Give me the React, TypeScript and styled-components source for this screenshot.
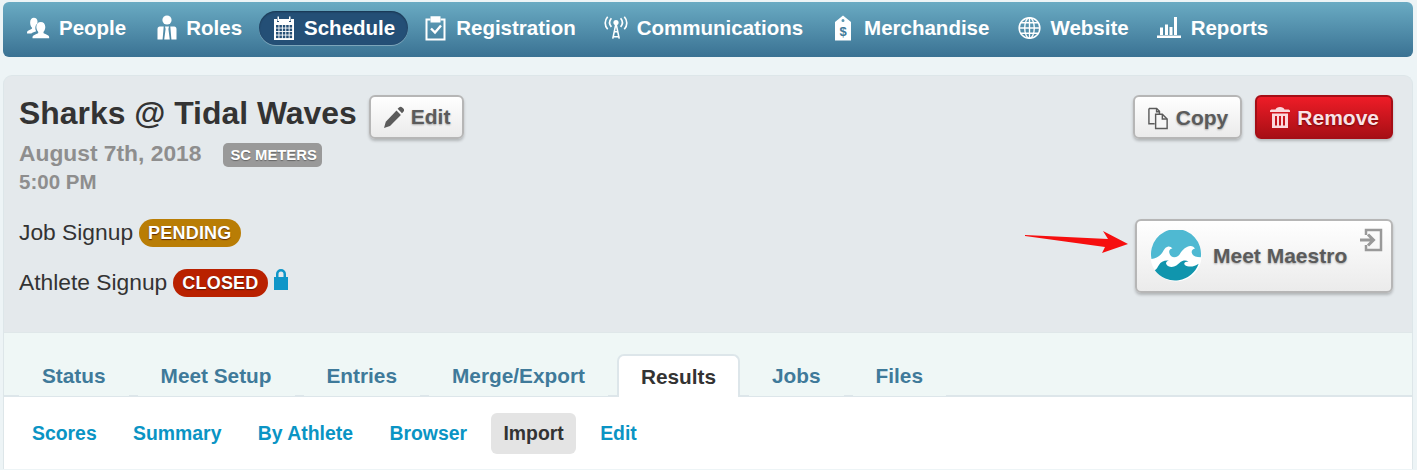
import styled, { createGlobalStyle } from 'styled-components';

const GlobalStyle = createGlobalStyle`
	html, body {
		margin: 0;
		padding: 0;
		background: #edf4f6;
		font-family: "Liberation Sans", Arial, sans-serif;
		color: #333;
		overflow: hidden;
	}
`;

const Page = styled.div`
	width: 1417px;
	height: 470px;
	padding: 2px 4px 0 3px;
	box-sizing: border-box;
	overflow: hidden;
`;

const NavBar = styled.nav`
	height: 55px;
	display: flex;
	align-items: center;
	padding: 0 0 3px 9px;
	box-sizing: border-box;
	border-radius: 6px;
	background: linear-gradient(#6aabc3, #3a7293);
`;

const NavItem = styled.a<{ $active?: boolean; $pull?: number }>`
	display: flex;
	align-items: center;
	height: 34px;
	box-sizing: border-box;
	padding: 0 13px 0 14px;
	margin-right: 3px;
	margin-left: ${(p) => p.$pull ?? 0}px;
	gap: 9px;
	color: #fff;
	font-size: 20.5px;
	font-weight: 700;
	white-space: nowrap;
	border-radius: 17px;
	background: ${(p) => (p.$active ? '#244f76' : 'transparent')};
	box-shadow: ${(p) =>
		p.$active ? 'inset 0 1px 2px rgba(0,0,0,.35), 0 1px 0 rgba(255,255,255,.3)' : 'none'};
	svg {
		display: block;
		flex: none;
	}
`;

const Panel = styled.main`
	margin-top: 18px;
	border: 1px solid #dde6e9;
	border-bottom: 0;
	border-radius: 9px 9px 0 0;
	background: #e4e9ec;
	overflow: hidden;
`;

const Header = styled.header`
	height: 257px;
	display: flex;
	justify-content: space-between;
	padding: 19px 19px 0 15px;
	box-sizing: border-box;
	border-bottom: 1px solid #dfe7e9;
	position: relative;
`;

const TitleRow = styled.div`
	display: flex;
	align-items: center;
	gap: 12px;
	height: 43px;
`;

const Title = styled.h1`
	margin: 0;
	font-size: 31.9px;
	font-weight: 700;
	color: #333;
	line-height: 38px;
	position: relative;
	top: -4px;
`;

const Button = styled.button<{ $danger?: boolean }>`
	display: inline-flex;
	align-items: center;
	justify-content: center;
	gap: 6px;
	height: 44px;
	padding: 1px 12px 0;
	box-sizing: border-box;
	font-family: inherit;
	font-size: 21px;
	font-weight: 700;
	border-radius: 6px;
	color: ${(p) => (p.$danger ? '#fbe3e6' : '#5b5b5b')};
	border: 2px solid ${(p) => (p.$danger ? '#a50e16' : '#b6b6b6')};
	background: ${(p) =>
		p.$danger ? 'linear-gradient(#ee1c27, #a80f15)' : 'linear-gradient(#ffffff, #ebebeb)'};
	box-shadow: 0 2px 3px rgba(0, 0, 0, 0.22);
	text-shadow: ${(p) =>
		p.$danger ? '0 1px 2px rgba(80,0,0,.8)' : '0 1px 2px rgba(0,0,0,.3)'};
`;

const DateRow = styled.div`
	display: flex;
	align-items: center;
	height: 31px;
	gap: 22px;
`;

const Muted = styled.span`
	color: #8e8e8e;
	font-size: 22.8px;
	font-weight: 700;
`;

const TimeText = styled(Muted)`
	display: block;
	font-size: 20.5px;
	line-height: 26px;
`;

const KindBadge = styled.span`
	background: #999;
	color: #fff;
	font-size: 14.8px;
	font-weight: 700;
	height: 24px;
	line-height: 24px;
	padding: 0 5px 0 7px;
	border-radius: 5px;
	margin-top: 3px;
	text-shadow: 0 1px 1px rgba(0, 0, 0, 0.35);
`;

const SignupList = styled.div`
	margin-top: 24px;
	display: flex;
	flex-direction: column;
	gap: 22px;
`;

const SignupRow = styled.div`
	display: flex;
	align-items: center;
	height: 28px;
	gap: 6px;
	font-size: 22.8px;
	color: #333;
`;

const SignupLabel = styled.span`
	margin-bottom: 2px;
`;

const Pill = styled.span<{ $color: string }>`
	height: 28px;
	line-height: 28px;
	padding: 0 9px;
	border-radius: 14px;
	background: ${(p) => p.$color};
	color: #fff;
	font-size: 18px;
	font-weight: 700;
	letter-spacing: 0.2px;
	text-shadow: 0 1px 1px rgba(70, 20, 0, 0.8);
`;

const LockGlyph = styled.svg`
	margin: 0 0 7px -1px;
`;

const RightColumn = styled.div`
	display: flex;
	flex-direction: column;
	align-items: flex-end;
`;

const ButtonRow = styled.div`
	display: flex;
	gap: 13px;
`;

const MaestroButton = styled(Button)`
	position: relative;
	margin-top: 80px;
	width: 258px;
	height: 74px;
	justify-content: flex-start;
	padding: 0 0 0 13px;
	gap: 11px;
	font-size: 21px;
`;

const ExitIcon = styled.svg`
	position: absolute;
	top: 7px;
	right: 8px;
`;

const Arrow = styled.svg`
	position: absolute;
	top: 154px;
	left: 1021px;
`;

const TabStrip = styled.div`
	height: 64px;
	display: flex;
	align-items: flex-end;
	padding-left: 15px;
	gap: 9px;
	background: #eff7f6;
	border-bottom: 2px solid #dde6ea;
	box-sizing: border-box;
`;

const Tab = styled.a<{ $active?: boolean }>`
	height: 43px;
	line-height: 41px;
	padding: 0 ${(p) => (p.$active ? '22px' : '21px')};
	margin-bottom: ${(p) => (p.$active ? '-2px' : '-1px')};
	box-sizing: border-box;
	font-size: 20.8px;
	font-weight: 700;
	color: ${(p) => (p.$active ? '#333' : '#3f7a9a')};
	background: ${(p) => (p.$active ? '#fff' : '#eff7f6')};
	border: 2px solid ${(p) => (p.$active ? '#dde6ea' : 'transparent')};
	border-bottom: 0;
	border-radius: 7px 7px 0 0;
`;

const SubNav = styled.div`
	height: 72px;
	background: #fff;
	display: flex;
	padding: 16px 0 0 16px;
	box-sizing: border-box;
	gap: 12.4px;
`;

const SubLink = styled.a<{ $active?: boolean }>`
	height: 41px;
	line-height: 40px;
	padding: 0 12px;
	border-radius: 6px;
	font-size: 19.4px;
	font-weight: 700;
	color: ${(p) => (p.$active ? '#333' : '#0a94c4')};
	background: ${(p) => (p.$active ? '#e4e4e4' : 'transparent')};
`;

const PeopleIcon = () => (
	<svg width="24" height="26" viewBox="0 0 26 26" fill="#fff">
		<path d="M8.500 2c2.400 0 4 1.800 4 4.300 0 .8-.2 1.500-.4 2.200-1.300 1.100-2 2.700-2 4.700 0 1.300.4 2.500 1 3.400-2 .6-4 1.500-5.300 2.400H1.200c-.2-1.500 0-2.500 1-3.100 1.300-.8 3-1.200 4.200-2 .2-.5.100-1.200-.2-1.700C5.300 11.600 4.500 9.500 4.500 7 4.500 4 6.200 2 8.500 2z" />
		<path d="M16 6.500c2.900 0 4.900 2.200 4.900 5.300 0 2-.7 3.700-1.700 5-.4.700-.4 1.400-.1 2 1.500.9 3.400 1.300 5 2.200.9.500 1.100 1.700 1 3H7.100c-.2-1.300.1-2.500 1-3 1.600-.9 3.500-1.300 5-2.200.3-.6.300-1.300-.1-2-1-1.300-1.800-3-1.800-5 0-3.100 2-5.300 4.800-5.300z" />
	</svg>
);

const RolesIcon = () => (
	<svg width="20" height="26" viewBox="0 0 20 26" fill="#fff">
		<circle cx="10" cy="5" r="4.600" />
		<path d="M.5 14c0-1.600.9-2.500 2.300-2.500h3.900L5.600 24.500H.5z" />
		<path d="M19.500 14c0-1.600-.9-2.500-2.300-2.500h-3.900l1.100 13h5.100z" />
		<path d="M8 11.500h4l-.6 2.500 1.400 10.500H7.200L8.600 14z" />
	</svg>
);

const CalendarIcon = () => (
	<svg width="22" height="26" viewBox="0 0 22 26" fill="#fff">
		<path d="M1 4h3v3h2V4h10v3h2V4h3v21H1z" />
		<path d="M4.500 1.500h1.500v4.500H4.500zM16 1.500h1.500v4.500H16z" />
		<g fill="#244f76">
			{[3, 6.400, 9.800, 13.200, 16.600].map((x) =>
				[10, 13.500, 17, 20.500].map((y) => (
					<rect key={`${x}-${y}`} x={x} y={y} width="2.500" height="2.600" />
				))
			)}
		</g>
	</svg>
);

const ClipboardIcon = () => (
	<svg width="23" height="26" viewBox="0 0 22 26" fill="none" stroke="#fff" strokeWidth="2">
		<path d="M6 4.500H2v20h18v-20h-4" />
		<path d="M7 2.200h8v4.300H7z" fill="#fff" />
		<path d="M6.500 13.500l4 4 6-7" strokeWidth="2.400" />
	</svg>
);

const TowerIcon = () => (
	<svg width="24" height="26" viewBox="0 0 26 26" fill="none" stroke="#fff" strokeWidth="1.500">
		<circle cx="13" cy="7" r="2.800" fill="#fff" stroke="none" />
		<path d="M13 8l-3.500 16.500M13 8l3.500 16.500M10.800 17h4.400M9.800 22.500h6.400" strokeWidth="1.700" />
		<path d="M8 2.500c-2.400 2.800-2.400 6.500 0 9.300M18 2.500c2.400 2.800 2.400 6.500 0 9.300" strokeWidth="1.800" />
		<path d="M4 .8c-3.600 4-3.600 9.500 0 13.500M22 .8c3.600 4 3.600 9.500 0 13.500" strokeWidth="1.800" />
	</svg>
);

const TagIcon = () => (
	<svg width="21" height="26" viewBox="0 0 21 26" fill="#fff">
		<path fillRule="evenodd" d="M9 .5l8 6.500v18.500H1V7zM9 4a1.500 1.500 0 100 3 1.500 1.500 0 000-3z" />
		<text
			x="9"
			y="21"
			textAnchor="middle"
			fill="#3f7a9a"
			fontSize="13"
			fontWeight="700"
			fontFamily="Liberation Sans"
		>
			$
		</text>
	</svg>
);

const GlobeIcon = () => (
	<svg width="23" height="24" viewBox="0 0 24 24" fill="none" stroke="#fff" strokeWidth="1.400">
		<circle cx="12" cy="12" r="10.800" strokeWidth="1.600" />
		<ellipse cx="12" cy="12" rx="5" ry="10.800" />
		<path d="M12 1v22M1.500 12h21M3 6.500h18M3 17.500h18" />
	</svg>
);

const ChartIcon = () => (
	<svg width="25" height="24" viewBox="0 0 25 24" fill="#fff">
		<path d="M0 19.500h24v2.500H0z" />
		<path d="M3 11.500h3V19H3zM8 8.500h3V19H8zM12.500 11h3v8h-3zM17 1h3v18h-3z" />
	</svg>
);

const PencilIcon = () => (
	<svg width="22" height="24" viewBox="0 0 22 24" fill="#5b5b5b">
		<path d="M16 2.500c1-1 2.300-1 3.200-.1l1.200 1.200c.9.900.9 2.200 0 3.200l-1.400 1.400-4.400-4.400z" />
		<path d="M13.500 5.500l4.400 4.400L7 21l-6 2 1.800-6.300z" />
	</svg>
);

const CopyIcon = () => (
	<svg width="23" height="24" viewBox="0 0 24 24" fill="none" stroke="#5b5b5b" strokeWidth="1.500">
		<path d="M2 2h8l3 3v3M8 18H2V2" />
		<path d="M10 2v3.500h3.500" />
		<path d="M9 8h7l5 5v10H9z" fill="#f6f6f6" />
		<path d="M16 8v5h5" />
	</svg>
);

const TrashIcon = () => (
	<svg width="22" height="24" viewBox="0 0 22 24" fill="#fbd8dc">
		<path d="M1 5c0-1 1-1.500 2-1.500h3.500C7 2 8.500 1 11 1s4 1 4.500 2.500H19c1 0 2 .5 2 1.500v1H1z" />
		<path
			fillRule="evenodd"
			d="M3 7.500h16V22H3zM6 10v9.500h2V10zM10 10v9.500h2V10zM14 10v9.500h2V10z"
		/>
	</svg>
);

const LockIcon = () => (
	<LockGlyph width="16" height="23" viewBox="0 0 16 23" fill="#0f96c8">
		<path
			fillRule="evenodd"
			d="M3 9V6a5 5 0 0110 0v3h2v13H1V9zM5.500 9h5V6a2.500 2.500 0 00-5 0z"
		/>
	</LockGlyph>
);

const MaestroLogo = () => (
	<svg width="52" height="52" viewBox="0 0 54 54">
		<circle cx="27" cy="27" r="26.500" fill="#fff" />
		<path
			d="M1.500 30C5 30 9 28 11.700 25 14 22 15 18 18.300 17.300 20 16.500 22 17.500 23.300 19.300 21 19.500 19.500 21.500 20 23.300 20.500 26.500 23 28.300 25 28.300 28 28.300 30 27 31 25 34 20 38 17 41.700 16.700 44 16.500 46 18 46.700 19.300 44.500 19.500 43 21.500 43.300 23.300 44 26.500 47 28.300 52.800 28.300A26 26 0 1 0 1.500 30Z"
			fill="#4fb9d2"
		/>
		<path
			d="M5 41.700C7 41 8 38 9.500 36 11 33 15 31 20 31.700 17.500 32 16 34 17 35.500 18 37.500 20 38.300 22.500 38.300 26 38.300 29 36 31.700 33.300 33.500 31.800 37 31 40 32.700 37 32.700 34.500 34 36 36 38 38 42 38.300 44 37.800 46.500 37.300 48 36.300 50.500 35A26 26 0 0 1 5 41.700Z"
			fill="#1095ad"
		/>
	</svg>
);

const navItems = [
	{ label: 'People', icon: <PeopleIcon /> },
	{ label: 'Roles', icon: <RolesIcon />, pull: 1 },
	{ label: 'Schedule', icon: <CalendarIcon />, active: true, pull: 1 },
	{ label: 'Registration', icon: <ClipboardIcon />, pull: -1 },
	{ label: 'Communications', icon: <TowerIcon />, pull: -2 },
	{ label: 'Merchandise', icon: <TagIcon />, pull: 1 },
	{ label: 'Website', icon: <GlobeIcon />, pull: -1 },
	{ label: 'Reports', icon: <ChartIcon />, pull: -2 },
];

const tabs = ['Status', 'Meet Setup', 'Entries', 'Merge/Export', 'Results', 'Jobs', 'Files'];
const subLinks = ['Scores', 'Summary', 'By Athlete', 'Browser', 'Import', 'Edit'];

export default function App() {
	return (
		<Page>
			<GlobalStyle />
			<NavBar>
				{navItems.map((item) => (
					<NavItem key={item.label} $active={item.active} $pull={item.pull}>
						{item.icon}
						{item.label}
					</NavItem>
				))}
			</NavBar>
			<Panel>
				<Header>
					<div>
						<TitleRow>
							<Title>Sharks @ Tidal Waves</Title>
							<Button>
								<PencilIcon />
								Edit
							</Button>
						</TitleRow>
						<DateRow>
							<Muted>August 7th, 2018</Muted>
							<KindBadge>SC METERS</KindBadge>
						</DateRow>
						<TimeText>5:00 PM</TimeText>
						<SignupList>
							<SignupRow>
								<SignupLabel>Job Signup</SignupLabel>
								<Pill $color="#b97d05">PENDING</Pill>
							</SignupRow>
							<SignupRow>
								<SignupLabel>Athlete Signup</SignupLabel>
								<Pill $color="#b92100">CLOSED</Pill>
								<LockIcon />
							</SignupRow>
						</SignupList>
					</div>
					<RightColumn>
						<ButtonRow>
							<Button>
								<CopyIcon />
								Copy
							</Button>
							<Button $danger>
								<TrashIcon />
								Remove
							</Button>
						</ButtonRow>
						<MaestroButton>
							<MaestroLogo />
							Meet Maestro
							<ExitIcon width="24" height="24" viewBox="0 0 24 24" fill="none" stroke="#999" strokeWidth="2.500">
								<path d="M7 7V2h15v20H7v-5" />
								<path d="M1 12h12M9 6.500l5.500 5.500L9 17.500" strokeWidth="3" />
							</ExitIcon>
						</MaestroButton>
					</RightColumn>
					<Arrow width="108" height="26" viewBox="0 0 108 26">
						<path d="M0 5l83 4-5-8 25 13-26 9 3-6L0 6z" fill="#f60f0f" />
					</Arrow>
				</Header>
				<TabStrip>
					{tabs.map((tab) => (
						<Tab key={tab} $active={tab === 'Results'}>
							{tab}
						</Tab>
					))}
				</TabStrip>
				<SubNav>
					{subLinks.map((link) => (
						<SubLink key={link} $active={link === 'Import'}>
							{link}
						</SubLink>
					))}
				</SubNav>
			</Panel>
		</Page>
	);
}
